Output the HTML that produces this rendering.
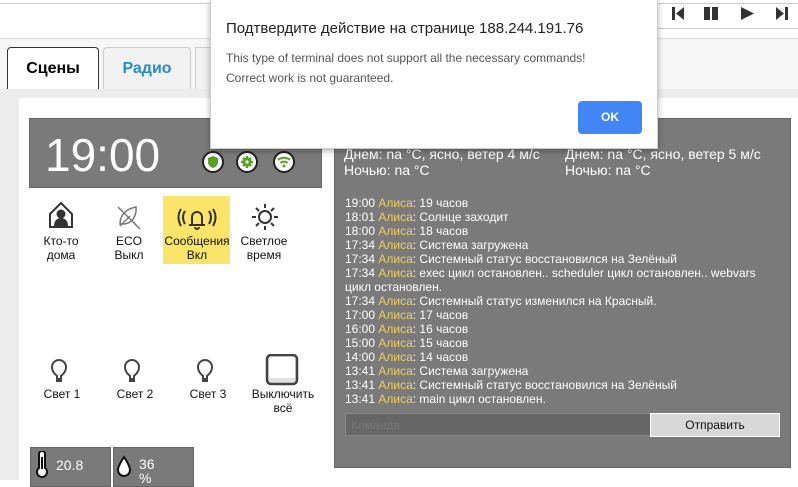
<!DOCTYPE html>
<html><head><meta charset="utf-8"><style>
*{box-sizing:border-box;margin:0;padding:0}
body{width:798px;height:480px;overflow:hidden;background:#fff;font-family:"Liberation Sans",sans-serif;position:relative}
.abs{position:absolute}
.lbl{font-size:12px;color:#111;text-align:center;line-height:14px}
.log{font-size:12px;color:#fff;line-height:14px}
.log b{font-weight:normal;color:#f0d060}
</style></head><body>
<div class="abs" style="left:0;top:3px;width:798px;height:1px;background:#ccc"></div>
<div class="abs" style="left:0;top:38px;width:798px;height:60px;background:#f7f7f7;border-top:1px solid #ddd"></div>
<div class="abs" style="left:657px;top:28px;width:141px;height:1px;background:#ccc"></div>
<div class="abs" style="left:7px;top:47px;width:92px;height:43px;background:#fff;border:1px solid #333;border-bottom:none;border-radius:4px 4px 0 0;font-weight:bold;font-size:16px;text-align:center;line-height:42px">Сцены</div>
<div class="abs" style="left:103px;top:47px;width:88px;height:42px;background:#f2f2f2;border:1px solid #ccc;border-bottom:none;border-radius:4px 4px 0 0;font-weight:bold;font-size:16px;color:#2a8cc4;text-align:center;line-height:42px">Радио</div>
<div class="abs" style="left:195px;top:47px;width:20px;height:42px;background:#f2f2f2;border:1px solid #ccc;border-bottom:none"></div>
<div class="abs" style="left:0;top:89px;width:798px;height:391px;background:#ededed"></div>
<div class="abs" style="left:19px;top:98px;width:779px;height:382px;background:#fff"></div>
<div class="abs" style="left:29px;top:118px;width:293px;height:70px;background:#7a7a7a;border:1px solid #666"></div>
<div class="abs" style="left:45px;top:128px;font-size:46px;color:#fff;line-height:54px">19:00</div>
<svg class="abs" style="left:200px;top:150px" width="96" height="26">
<g stroke="#222" stroke-width="2" fill="#fff"><circle cx="13" cy="12" r="10"/><circle cx="47" cy="12" r="10"/><circle cx="84" cy="12" r="10"/></g>
<path d="M13 6l-5 2v4c0 3 2 5 5 6c3-1 5-3 5-6V8z" fill="#5aa020"/>
<circle cx="47" cy="12" r="4.5" fill="#5aa020"/><g stroke="#5aa020" stroke-width="2.5"><path d="M47 6v12M41 12h12M43 8l8 8M51 8l-8 8"/></g><circle cx="47" cy="12" r="1.6" fill="#fff"/>
<g fill="none" stroke="#5aa020" stroke-width="2"><path d="M78 10a9 9 0 0 1 12 0"/><path d="M80.5 13a5 5 0 0 1 7 0"/></g><circle cx="84" cy="16" r="1.5" fill="#5aa020"/>
</svg>
<div class="abs" style="left:163px;top:196px;width:67px;height:68px;background:#fae56a"></div>
<svg class="abs" style="left:44px;top:200px" width="240" height="34" fill="none" stroke="#333" stroke-width="2">
<path d="M6 14l11-11 11 11v13H6z"/><circle cx="17" cy="14" r="3.5" fill="#333"/><path d="M11 26c0-5 3-7 6-7s6 2 6 7z" fill="#333"/>
<g stroke="#777" stroke-width="1.5"><path d="M76 24c0-9 6-15 16-17c1 10-5 17-13 17z"/><path d="M74 7l22 22"/><path d="M76 26l10-10"/></g>
<path d="M148 25v-8a5 5 0 0 1 10 0v8zM145 25h16M151 27a2 2 0 0 0 4 0"/><path d="M141 11q-4 6 0 13M137 9q-5 8 0 17M165 11q4 6 0 13M169 9q5 8 0 17"/>
<circle cx="221" cy="17" r="6"/><path d="M221 4v4M221 26v4M208 17h4M230 17h4M212 8l3 3M227 23l3 3M230 8l-3 3M215 23l-3 3"/>
</svg>
<div class="abs lbl" style="left:30px;top:234px;width:62px">Кто-то<br>дома</div>
<div class="abs lbl" style="left:98px;top:234px;width:62px">ECO<br>Выкл</div>
<div class="abs lbl" style="left:163px;top:234px;width:68px">Сообщения<br>Вкл</div>
<div class="abs lbl" style="left:232px;top:234px;width:64px">Светлое<br>время</div>
<svg class="abs" style="left:40px;top:354px" width="270" height="34" fill="none" stroke="#444" stroke-width="2">
<g id="b"><path d="M17 27v-5c-2-2-5-4-5-9a7 7 0 0 1 14 0c0 5-3 7-5 9v5z"/><path d="M17 25h4"/></g>
<use href="#b" x="73"/><use href="#b" x="146"/>
<rect x="227" y="1" width="30" height="29" rx="4" fill="#e0e0e0" stroke="#444" stroke-width="2.5"/><rect x="229" y="3" width="26" height="21" rx="2" fill="#fff" stroke="none"/>
</svg>
<div class="abs lbl" style="left:30px;top:387px;width:64px">Свет 1</div>
<div class="abs lbl" style="left:103px;top:387px;width:64px">Свет 2</div>
<div class="abs lbl" style="left:176px;top:387px;width:64px">Свет 3</div>
<div class="abs lbl" style="left:246px;top:387px;width:74px">Выключить<br>всё</div>
<div class="abs" style="left:30px;top:447px;width:81px;height:40px;background:#7a7a7a;border:1px solid #666"></div>
<div class="abs" style="left:113px;top:447px;width:81px;height:40px;background:#7a7a7a;border:1px solid #666"></div>
<svg class="abs" style="left:33px;top:451px" width="160" height="29" fill="none" stroke="#111" stroke-width="2"><path d="M6 17V3a3 3 0 0 1 6 0v14a5 5 0 1 1-6 0z" fill="#fff"/><path d="M9 6v12"/><path d="M91 6q-6 9-6 13a6 6 0 0 0 12 0q0-4-6-13z" fill="#fff"/></svg>
<div class="abs" style="left:56px;top:457px;font-size:14px;color:#fff">20.8</div>
<div class="abs" style="left:139px;top:457px;font-size:14px;color:#fff;line-height:14px">36<br>%</div>
<div class="abs" style="left:334px;top:118px;width:457px;height:350px;background:#7a7a7a;border:1px solid #666"></div>
<div class="abs" style="left:344px;top:146px;font-size:14px;color:#fff;line-height:16px">Днем: na °C, ясно, ветер 4 м/с<br>Ночью: na °C</div>
<div class="abs" style="left:565px;top:146px;font-size:14px;color:#fff;line-height:16px">Днем: na °C, ясно, ветер 5 м/с<br>Ночью: na °C</div>
<div class="abs log" style="left:345px;top:196px;width:425px">
19:00 <b>Алиса</b>: 19 часов<br>18:01 <b>Алиса</b>: Солнце заходит<br>18:00 <b>Алиса</b>: 18 часов<br>17:34 <b>Алиса</b>: Система загружена<br>17:34 <b>Алиса</b>: Системный статус восстановился на Зелёный<br>17:34 <b>Алиса</b>: exec цикл остановлен.. scheduler цикл остановлен.. webvars цикл остановлен.<br>17:34 <b>Алиса</b>: Системный статус изменился на Красный.<br>17:00 <b>Алиса</b>: 17 часов<br>16:00 <b>Алиса</b>: 16 часов<br>15:00 <b>Алиса</b>: 15 часов<br>14:00 <b>Алиса</b>: 14 часов<br>13:41 <b>Алиса</b>: Система загружена<br>13:41 <b>Алиса</b>: Системный статус восстановился на Зелёный<br>13:41 <b>Алиса</b>: main цикл остановлен.</div>
<div class="abs" style="left:345px;top:413px;width:306px;height:23px;background:#666;border:1px solid #888;font-size:12px;color:#777;padding:4px 5px">Команда</div>
<div class="abs" style="left:650px;top:413px;width:130px;height:24px;background:#d8d8d8;border:1px solid #fff;font-size:12px;color:#111;text-align:center;line-height:22px">Отправить</div>
<svg class="abs" style="left:668px;top:6px" width="124" height="16" fill="#333">
<rect x="4" y="1" width="3" height="13"/><path d="M16 1v13l-8-6.5z"/>
<rect x="36" y="1" width="6" height="13"/><rect x="44" y="1" width="6" height="13"/>
<path d="M73 1v13l13-6.5z"/>
<path d="M108 1v13l8-6.5z"/><rect x="117" y="1" width="3" height="13"/>
</svg>
<div class="abs" style="left:210px;top:0;width:448px;height:149px;background:#fff;border:1px solid #ccc;border-top:none;box-shadow:0 2px 6px rgba(0,0,0,.3)"></div>
<div class="abs" style="left:226px;top:20px;font-size:15px;color:#222">Подтвердите действие на странице 188.244.191.76</div>
<div class="abs" style="left:226px;top:48px;font-size:12px;color:#555;line-height:20px">This type of terminal does not support all the necessary commands!<br>Correct work is not guaranteed.</div>
<div class="abs" style="left:578px;top:101px;width:64px;height:33px;background:#4285f4;border-radius:4px;color:#fff;font-size:12px;font-weight:bold;text-align:center;line-height:33px">OK</div>
</body></html>
